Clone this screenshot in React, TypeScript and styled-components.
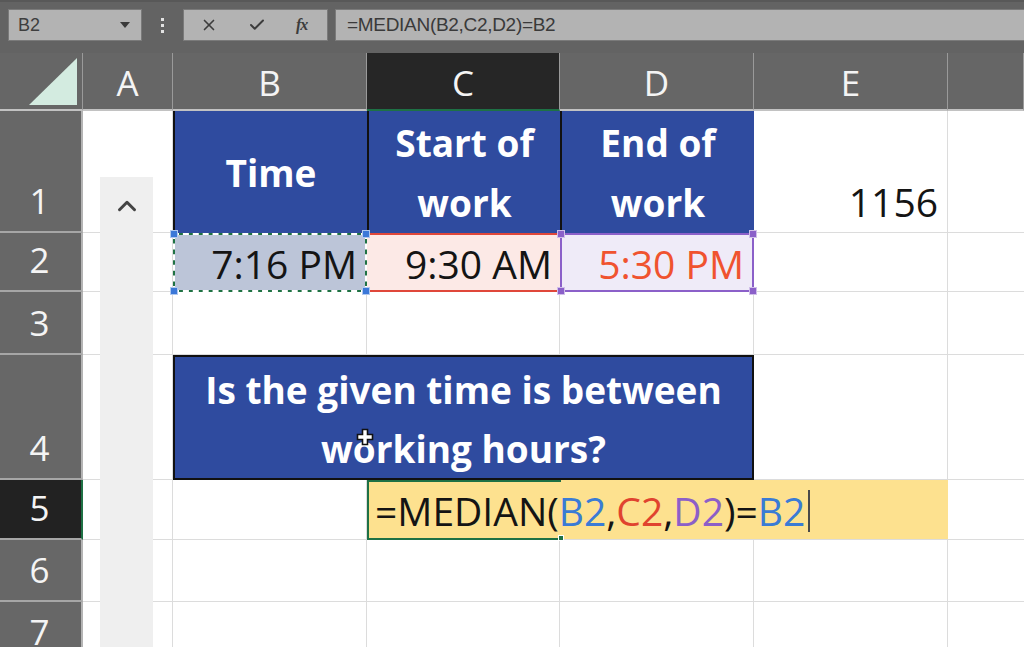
import React from "react";
import styled, { createGlobalStyle, css } from "styled-components";
import { X, Check, ChevronUp } from "lucide-react";

const GlobalStyle = createGlobalStyle`
  html, body { margin: 0; padding: 0; background: #ffffff; }
  body { font-family: "Open Sans", "Liberation Sans", sans-serif; }
  * { box-sizing: border-box; }
`;

const Page = styled.div`
  width: 1024px;
  height: 647px;
  overflow: hidden;
  display: flex;
  flex-direction: column;
  background: #ffffff;
`;

/* ---------- formula bar ---------- */
const FormulaBar = styled.div`
  height: 53px;
  flex-shrink: 0;
  display: flex;
  align-items: flex-start;
  padding: 7px 0 0 8px;
  background: #636363;
  border-top: 2px solid #585858;
`;

const BarBox = styled.div`
  height: 32px;
  display: flex;
  align-items: center;
  background: #b3b3b3;
  border: 1px solid #7a7a7a;
  color: #3e3e3e;
  font-family: "Liberation Sans", Arial, sans-serif;
`;

const NameBox = styled(BarBox)`
  width: 134px;
  justify-content: space-between;
  padding: 0 9px 0 9px;
  font-size: 18px;
`;

const DropCaret = styled.span`
  width: 0;
  height: 0;
  border-left: 5px solid transparent;
  border-right: 5px solid transparent;
  border-top: 6px solid #3a3a3a;
  margin-right: 2px;
`;

const Grip = styled.div`
  width: 41px;
  height: 32px;
  display: flex;
  flex-direction: column;
  align-items: center;
  justify-content: center;
  gap: 3px;
`;

const GripDot = styled.span`
  width: 3px;
  height: 3px;
  background: #e2e2e2;
`;

const FuncBox = styled(BarBox)`
  width: 145px;
  padding-left: 16px;
  gap: 30px;
`;

const FxLabel = styled.span`
  width: 18px;
  font-family: "Liberation Serif", serif;
  font-style: italic;
  font-weight: 700;
  font-size: 16px;
  color: #3c3c3c;
  letter-spacing: -1px;
`;

const FormulaInput = styled(BarBox)`
  flex: 1;
  margin-left: 7px;
  border-right: none;
  padding-left: 11px;
  font-size: 19px;
  color: #3a3a3a;
  letter-spacing: -0.3px;
`;

/* ---------- sheet ---------- */
const Sheet = styled.div`
  position: relative;
  flex: 1;
  display: grid;
  grid-template-columns: 83px 90px 194px 193px 194px 194px 1fr;
  grid-template-rows: 58px 122px 59px 63px 125px 60px 62px 62px;
  background: #ffffff;
`;

const Corner = styled.div`
  background: #666666;
  border-right: 1px solid #9a9a9a;
  border-bottom: 2px solid #c2c2c2;
  display: flex;
  align-items: flex-end;
  justify-content: flex-end;
  padding: 0 5px 4px 0;
`;

const CornerTriangle = styled.div`
  width: 48px;
  height: 47px;
  background: #d3ebe0;
  clip-path: polygon(100% 0, 100% 100%, 0 100%);
`;

const ColHeader = styled.div<{ $active?: boolean }>`
  background: ${(p) => (p.$active ? "#262626" : "#666666")};
  color: #f4f4f4;
  font-size: 35px;
  display: flex;
  align-items: center;
  justify-content: center;
  border-right: 1px solid #9a9a9a;
  border-bottom: 2px solid ${(p) => (p.$active ? "#1e7145" : "#c2c2c2")};
  padding-top: 2px;
`;

const RowHeader = styled.div<{ $active?: boolean }>`
  background: ${(p) => (p.$active ? "#222222" : "#676767")};
  color: #f4f4f4;
  font-size: 35px;
  line-height: 60px;
  display: flex;
  align-items: flex-end;
  justify-content: center;
  border-bottom: 2px solid #a6a6a6;
  border-right: 2px solid ${(p) => (p.$active ? "#1e7145" : "#b4b4b4")};
  padding-right: 2px;
`;

const Cell = styled.div<{ $last?: boolean }>`
  border-right: ${(p) => (p.$last ? "none" : "1px solid #dcdcdc")};
  border-bottom: 1px solid #dcdcdc;
  display: flex;
  align-items: flex-end;
  justify-content: flex-end;
  font-size: 39px;
  line-height: 60px;
  color: #141414;
  padding-right: 9px;
`;

const TitleCell = styled.div<{ $span?: number; $boxed?: boolean }>`
  grid-column: span ${(p) => p.$span ?? 1};
  background: #2f4b9f;
  color: #ffffff;
  font-weight: 700;
  font-size: 37px;
  line-height: 60px;
  text-align: center;
  display: flex;
  align-items: center;
  justify-content: center;
  ${(p) =>
    p.$boxed
      ? css`
          border: 2px solid #111111;
          line-height: 59px;
          padding-top: 2px;
        `
      : css`
          border-left: 2px solid #111111;
          padding-top: 2px;
        `}
`;

const RefCell = styled.div<{ $bg: string; $ink?: string }>`
  position: relative;
  background: ${(p) => p.$bg};
  color: ${(p) => p.$ink ?? "#141414"};
  font-size: 39px;
  display: flex;
  align-items: center;
  justify-content: flex-end;
  padding-right: 8px;
  padding-top: 2px;
`;

const CopyCell = styled(RefCell)`
  border: 2px solid #1f7244;
  &::after {
    content: "";
    position: absolute;
    inset: -2px;
    border: 2px dashed #ffffff;
    pointer-events: none;
  }
`;

const StartCell = styled(RefCell)`
  border-top: 2px solid #e0473a;
  border-bottom: 2px solid #e0473a;
`;

const EndCell = styled(RefCell)`
  border: 2px solid #8b60c9;
`;

const Handle = styled.span<{ $color: string; $x: "l" | "r"; $y: "t" | "b" }>`
  position: absolute;
  width: 8px;
  height: 8px;
  background: ${(p) => p.$color};
  border: 1px solid rgba(255, 255, 255, 0.6);
  z-index: 3;
  ${(p) => (p.$x === "l" ? "left: -5px;" : "right: -5px;")}
  ${(p) => (p.$y === "t" ? "top: -5px;" : "bottom: -5px;")}
`;

const EditCell = styled.div`
  grid-column: span 3;
  position: relative;
  background: #fde18f;
  border-bottom: 1px solid #dcdcdc;
  display: flex;
  align-items: center;
  padding-left: 8px;
  padding-top: 2px;
  font-size: 39px;
  color: #141414;
  white-space: nowrap;
`;

const ActiveFrame = styled.span`
  position: absolute;
  left: 0;
  top: 0;
  bottom: -1px;
  width: 194px;
  border: 2px solid #1e7145;
  border-right: none;
  pointer-events: none;
`;

const FillHandle = styled.span`
  position: absolute;
  right: -3px;
  bottom: -3px;
  width: 6px;
  height: 6px;
  background: #1e7145;
  border: 1px solid #ffffff;
`;

const Ref = styled.span<{ $color: string }>`
  color: ${(p) => p.$color};
`;

const TextCaret = styled.span`
  display: inline-block;
  width: 2px;
  height: 42px;
  margin-left: 3px;
  background: #4a4a4a;
  vertical-align: middle;
`;

const PaneStrip = styled.div`
  position: absolute;
  left: 100px;
  top: 124px;
  bottom: 0;
  width: 53px;
  background: #efefef;
  display: flex;
  justify-content: center;
  padding-top: 14px;
  z-index: 2;
`;

const CellCursor = styled.svg`
  position: absolute;
  left: 356px;
  top: 375px;
  z-index: 4;
`;

type Side = { x: "l" | "r"; y: "t" | "b" };
const corners: Side[] = [
  { x: "l", y: "t" },
  { x: "r", y: "t" },
  { x: "l", y: "b" },
  { x: "r", y: "b" },
];

const Handles = ({ color }: { color: string }) => (
  <>
    {corners.map((c) => (
      <Handle key={c.x + c.y} $color={color} $x={c.x} $y={c.y} />
    ))}
  </>
);

const Blank = ({ last }: { last?: boolean }) => <Cell $last={last} />;

export default function App() {
  return (
    <Page>
      <GlobalStyle />
      <FormulaBar>
        <NameBox>
          <span>B2</span>
          <DropCaret />
        </NameBox>
        <Grip>
          <GripDot />
          <GripDot />
          <GripDot />
        </Grip>
        <FuncBox>
          <X size={18} strokeWidth={2.2} color="#3c3c3c" />
          <Check size={18} strokeWidth={2.6} color="#3c3c3c" />
          <FxLabel>fx</FxLabel>
        </FuncBox>
        <FormulaInput>=MEDIAN(B2,C2,D2)=B2</FormulaInput>
      </FormulaBar>

      <Sheet>
        {/* header row */}
        <Corner>
          <CornerTriangle />
        </Corner>
        <ColHeader>A</ColHeader>
        <ColHeader>B</ColHeader>
        <ColHeader $active>C</ColHeader>
        <ColHeader>D</ColHeader>
        <ColHeader>E</ColHeader>
        <ColHeader />

        {/* row 1 */}
        <RowHeader>1</RowHeader>
        <Blank />
        <TitleCell>Time</TitleCell>
        <TitleCell>
          Start of
          <br />
          work
        </TitleCell>
        <TitleCell>
          End of
          <br />
          work
        </TitleCell>
        <Cell>1156</Cell>
        <Blank last />

        {/* row 2 */}
        <RowHeader>2</RowHeader>
        <Blank />
        <CopyCell $bg="#bcc5d8">
          7:16 PM
          <Handles color="#3b78d8" />
        </CopyCell>
        <StartCell $bg="#fce9e6">9:30 AM</StartCell>
        <EndCell $bg="#efebf8" $ink="#f0532f">
          5:30 PM
          <Handles color="#8b60c9" />
        </EndCell>
        <Blank />
        <Blank last />

        {/* row 3 */}
        <RowHeader>3</RowHeader>
        <Blank />
        <Blank />
        <Blank />
        <Blank />
        <Blank />
        <Blank last />

        {/* row 4 */}
        <RowHeader>4</RowHeader>
        <Blank />
        <TitleCell $span={3} $boxed>
          Is the given time is between
          <br />
          working hours?
        </TitleCell>
        <Blank />
        <Blank last />

        {/* row 5 */}
        <RowHeader $active>5</RowHeader>
        <Blank />
        <Blank />
        <EditCell>
          =MEDIAN(<Ref $color="#3a7bd5">B2</Ref>,<Ref $color="#e0432f">C2</Ref>,
          <Ref $color="#8c5fc8">D2</Ref>)=<Ref $color="#3a7bd5">B2</Ref>
          <TextCaret />
          <ActiveFrame>
            <FillHandle />
          </ActiveFrame>
        </EditCell>
        <Blank last />

        {/* row 6 */}
        <RowHeader>6</RowHeader>
        <Blank />
        <Blank />
        <Blank />
        <Blank />
        <Blank />
        <Blank last />

        {/* row 7 */}
        <RowHeader>7</RowHeader>
        <Blank />
        <Blank />
        <Blank />
        <Blank />
        <Blank />
        <Blank last />

        <PaneStrip>
          <ChevronUp size={30} strokeWidth={2.4} color="#444444" />
        </PaneStrip>

        <CellCursor width="18" height="18" viewBox="0 0 18 18">
          <path
            d="M6.5 1.5h5v5h5v5h-5v5h-5v-5h-5v-5h5z"
            fill="#ffffff"
            stroke="#111111"
            strokeWidth="1.6"
          />
        </CellCursor>
      </Sheet>
    </Page>
  );
}
